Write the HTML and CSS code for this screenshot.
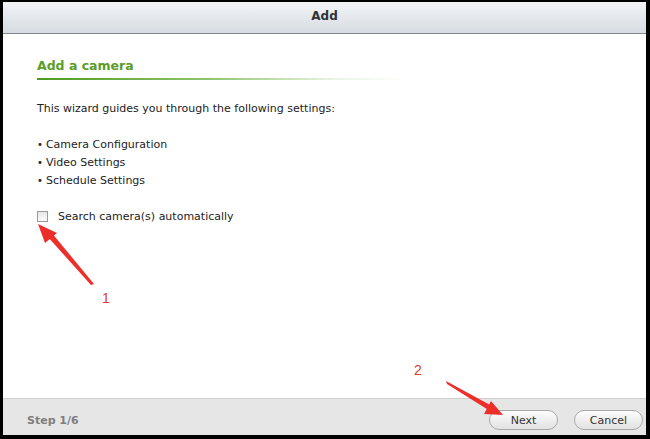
FILE: index.html
```html
<!DOCTYPE html>
<html lang="en">
<head>
    <meta charset="UTF-8">
    <title>Add</title>
    <link rel="stylesheet" href="styles.css">
</head>
<body>

<div class="window">
    <div class="titlebar">Add</div>

    <div class="content">
        <h2 class="section-title">Add a camera</h2>
        <p class="intro">This wizard guides you through the following settings:</p>
        <ul class="steps">
            <li>Camera Configuration</li>
            <li>Video Settings</li>
            <li>Schedule Settings</li>
        </ul>
        <label class="auto-search">
            <span class="checkbox"></span>
            Search camera(s) automatically
        </label>
    </div>

    <div class="footer">
        <span class="step">Step 1/6</span>
        <div class="buttons">
            <button class="btn">Next</button>
            <button class="btn">Cancel</button>
        </div>
    </div>

    <!-- red annotation arrows -->
    <svg class="notes" width="650" height="439" viewBox="0 0 650 439">
        <polygon points="94,284 91,285 47,236 51,232" fill="#ec2f2a"/>
        <polygon points="38,224 57,233 45,243" fill="#ec2f2a"/>
        <polygon points="446,381 447,384 490,411 492,406" fill="#ec2f2a"/>
        <polygon points="503,415 484,414 491,401" fill="#ec2f2a"/>
    </svg>
    <span class="mark mark-1">1</span>
    <span class="mark mark-2">2</span>
</div>

</body>
</html>
```

FILE: styles.css
```css
html, body {
    margin: 0;
    padding: 0;
}
body {
    background-color: #000;
    font-family: "DejaVu Sans", Verdana, sans-serif;
    width: 650px;
    height: 439px;
    overflow: hidden;
}
.window {
    position: relative;
    margin: 2px 4px 0 3px;
    height: 433px;
    background-color: #fff;
    display: flex;
    flex-direction: column;
}
.titlebar {
    height: 31px;
    line-height: 28px;
    text-align: center;
    font-size: 12px;
    font-weight: bold;
    color: #2e3238;
    background: linear-gradient(#f3f4f6, #d6dce2);
    border-bottom: 1px solid #80868d;
}
.content {
    flex: 1;
    padding: 24px 0 0 34px;
    font-size: 11px;
    color: #222;
}
.section-title {
    margin: 0;
    width: 374px;
    padding-bottom: 7px;
    font-size: 12.5px;
    color: #5b9d2b;
    background: linear-gradient(to right, #4f9a22 0%, #8cc46a 45%, rgba(220, 236, 210, 0.6) 80%, rgba(255, 255, 255, 0) 100%) left bottom / 100% 2px no-repeat;
}
.intro {
    margin: 22px 0 0 0;
}
.steps {
    list-style: none;
    margin: 21px 0 0 0;
    padding: 0;
    line-height: 18px;
}
.steps li::before {
    content: "\2022";
    font-size: 10px;
    margin-right: 3px;
}
.auto-search {
    display: flex;
    align-items: center;
    margin-top: 20px;
    gap: 10px;
}
.checkbox {
    display: inline-block;
    width: 9px;
    height: 9px;
    border: 1px solid #9a9a9a;
    background: linear-gradient(#e8e8e8, #fafafa);
}
.footer {
    height: 36px;
    border-top: 1px solid #cfcfcf;
    background-color: #e6e6e6;
    display: flex;
    align-items: center;
    justify-content: space-between;
    padding: 0 3px 0 24px;
}
.step {
    margin-top: 6px;
    font-size: 11px;
    font-weight: bold;
    color: #7e7e7e;
}
.buttons {
    display: flex;
    gap: 16px;
    margin-top: 6px;
}
.btn {
    width: 69px;
    height: 20px;
    border: 1px solid #a9a9a9;
    border-radius: 10px;
    background: linear-gradient(#fdfdfd, #e2e2e2);
    font-family: "DejaVu Sans", Verdana, sans-serif;
    font-size: 11px;
    color: #333;
    padding: 0;
}
.notes {
    position: absolute;
    left: -3px;
    top: -2px;
    pointer-events: none;
}
.mark {
    position: absolute;
    font-family: "Liberation Sans", Arial, sans-serif;
    font-size: 14px;
    color: #d8402e;
}
.mark-1 {
    left: 99px;
    top: 288px;
}
.mark-2 {
    left: 411px;
    top: 360px;
}
```
